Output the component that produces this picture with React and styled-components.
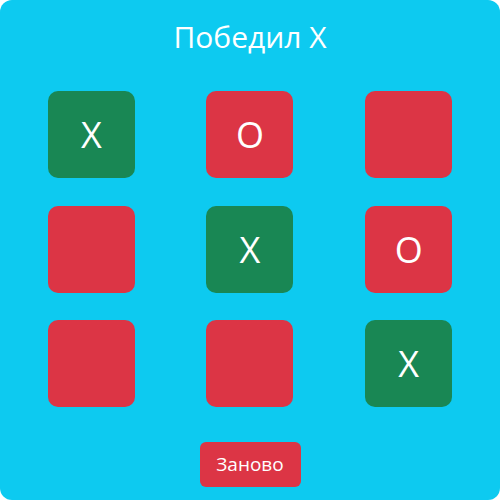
import React, { useState } from 'react';
import styled, { createGlobalStyle } from 'styled-components';

const GlobalStyle = createGlobalStyle`
    html, body {
        margin: 0;
        padding: 0;
        background: #ffffff;
    }
    body {
        font-family: "Open Sans", "Noto Sans", sans-serif;
    }
`;

const Board = styled.div`
    width: 500px;
    height: 500px;
    box-sizing: border-box;
    background: #0dcaf0;
    border-radius: 12px;
    display: flex;
    flex-direction: column;
    align-items: center;
    padding: 16px 12px 13px;
`;

const Title = styled.h1`
    margin: 0;
    color: #ffffff;
    font-size: 30px;
    font-weight: 400;
    line-height: 41px;
`;

const Grid = styled.div`
    width: 100%;
    display: grid;
    grid-template-columns: repeat(3, 1fr);
    row-gap: 27.5px;
    margin-top: 34px;
    justify-items: center;
`;

const Cell = styled.button`
    width: 87px;
    height: 87px;
    border: none;
    border-radius: 10px;
    background: ${props => (props.$win ? '#198754' : '#dc3545')};
    color: #ffffff;
    font-family: inherit;
    font-size: 36px;
    padding: 0;
    cursor: pointer;
`;

const ResetButton = styled.button`
    margin-top: 34.5px;
    width: 101px;
    height: 46px;
    border: none;
    border-radius: 6px;
    background: #dc3545;
    color: #ffffff;
    font-family: inherit;
    font-size: 19px;
    cursor: pointer;
`;

const start = ['X', 'O', '', '', 'X', 'O', '', '', 'X'];
const winLine = [0, 4, 8];

const App = () => {
    const [cells] = useState(start);
    return (
        <>
            <GlobalStyle />
            <Board>
                <Title>Победил X</Title>
                <Grid>
                    {cells.map((v, i) => (
                        <Cell key={i} $win={winLine.includes(i)}>{v}</Cell>
                    ))}
                </Grid>
                <ResetButton>Заново</ResetButton>
            </Board>
        </>
    );
};

export default App;
